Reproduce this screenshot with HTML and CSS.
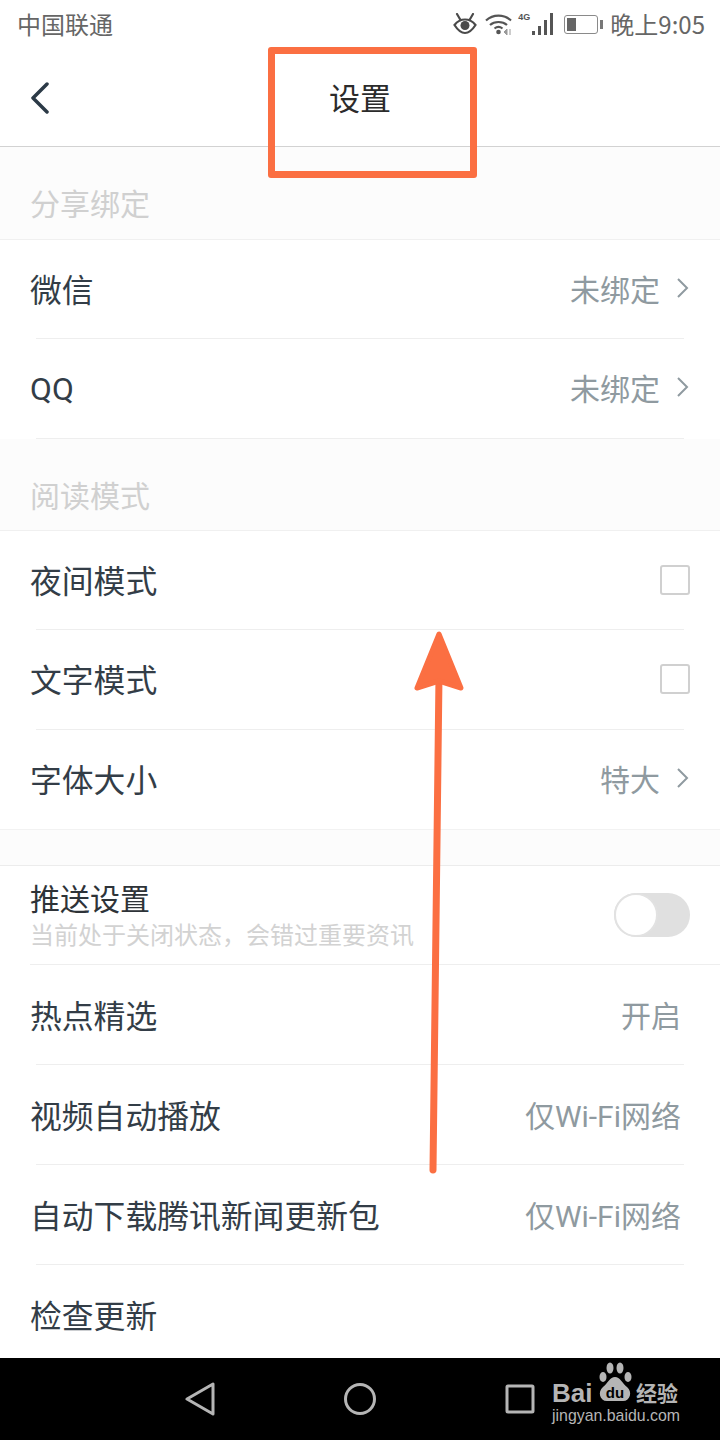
FILE: index.html
```html
<!DOCTYPE html>
<html lang="zh-CN">

<head>
    <meta charset="UTF-8">
    <meta name="viewport" content="width=device-width, initial-scale=1.0">
    <title>设置</title>
    <link rel="stylesheet" href="styles.css">
</head>

<body>
    <div class="screen">
        <div class="status-bar">
            <span class="carrier">中国联通</span>
            <div class="status-right">
                <svg class="icon-eye" width="24" height="22" viewBox="0 0 24 22" fill="none" stroke="#4a4a4a" stroke-width="2.2">
                    <path d="M1.5 12C5 7.500 8.500 6.500 12 6.500s7 1 10.500 5.500C19 17.500 15.500 20 12 20S5 17.500 1.500 12z"/>
                    <circle cx="12" cy="12.500" r="4.500" fill="#4a4a4a" stroke="none"/>
                    <path d="M4 1l3.500 6M20 1l-3.500 6" stroke-linecap="round"/>
                </svg>
                <svg class="icon-wifi" width="27" height="22" viewBox="0 0 27 22" fill="none" stroke="#555" stroke-width="2.2">
                    <path d="M1 7.500C8 1 19 1 26 7.500"/>
                    <path d="M5 12C9.500 8 17.500 8 22 12"/>
                    <path d="M9.500 15.500c2.500-2 5.500-2 8 0"/>
                    <circle cx="13.500" cy="19" r="2.300" fill="#555" stroke="none"/>
                    <path d="M19 19l3-3v6zM25 16v6" fill="#999" stroke="#999" stroke-width="1"/>
                </svg>
                <div class="signal">
                    <span class="net-type">4G</span>
                    <div class="bars">
                        <i class="bar bar-1"></i>
                        <i class="bar bar-2"></i>
                        <i class="bar bar-3"></i>
                        <i class="bar bar-4"></i>
                    </div>
                </div>
                <div class="battery">
                    <div class="battery-body"><div class="battery-level"></div></div>
                    <div class="battery-tip"></div>
                </div>
                <span class="clock">晚上9:05</span>
            </div>
        </div>

        <div class="nav-header">
            <svg class="back" width="22" height="32" viewBox="0 0 22 32" fill="none" stroke="#2c3a47" stroke-width="3.5" stroke-linecap="round" stroke-linejoin="round">
                <path d="M18 2L4 16l14 14"/>
            </svg>
            <h1 class="title">设置</h1>
        </div>

        <div class="section-title section-first">分享绑定</div>
        <div class="group">
            <div class="row row-short">
                <span class="row-label">微信</span>
                <div class="row-value">未绑定<svg class="chevron" width="14" height="22" viewBox="0 0 14 22" fill="none" stroke="#8f9aa0" stroke-width="2"><path d="M2 2l9 9-9 9"/></svg></div>
            </div>
            <div class="row">
                <span class="row-label label-latin">QQ</span>
                <div class="row-value">未绑定<svg class="chevron" width="14" height="22" viewBox="0 0 14 22" fill="none" stroke="#8f9aa0" stroke-width="2"><path d="M2 2l9 9-9 9"/></svg></div>
            </div>
        </div>

        <div class="section-title">阅读模式</div>
        <div class="group">
            <div class="row row-short">
                <span class="row-label">夜间模式</span>
                <div class="checkbox"></div>
            </div>
            <div class="row">
                <span class="row-label">文字模式</span>
                <div class="checkbox"></div>
            </div>
            <div class="row row-last">
                <span class="row-label">字体大小</span>
                <div class="row-value">特大<svg class="chevron" width="14" height="22" viewBox="0 0 14 22" fill="none" stroke="#8f9aa0" stroke-width="2"><path d="M2 2l9 9-9 9"/></svg></div>
            </div>
        </div>

        <div class="spacer"></div>

        <div class="group">
            <div class="row row-push">
                <div class="push-text">
                    <span class="push-label">推送设置</span>
                    <span class="push-note">当前处于关闭状态，会错过重要资讯</span>
                </div>
                <div class="toggle"><div class="knob"></div></div>
            </div>
            <div class="row row-plain">
                <span class="row-label">热点精选</span>
                <span class="row-value">开启</span>
            </div>
            <div class="row row-plain">
                <span class="row-label">视频自动播放</span>
                <span class="row-value">仅Wi-Fi网络</span>
            </div>
            <div class="row row-plain">
                <span class="row-label">自动下载腾讯新闻更新包</span>
                <span class="row-value">仅Wi-Fi网络</span>
            </div>
            <div class="row row-plain row-last">
                <span class="row-label">检查更新</span>
            </div>
        </div>

        <div class="system-nav">
            <svg width="30" height="34" viewBox="0 0 30 34" fill="none" stroke="#b5b5b5" stroke-width="3" stroke-linejoin="round"><path d="M28 2v30L2 17z"/></svg>
            <svg width="34" height="34" viewBox="0 0 34 34" fill="none" stroke="#b5b5b5" stroke-width="3"><circle cx="17" cy="17" r="14.5"/></svg>
            <svg width="30" height="30" viewBox="0 0 30 30" fill="none" stroke="#b5b5b5" stroke-width="3" stroke-linejoin="round"><rect x="2" y="2" width="26" height="26" rx="1"/></svg>
        </div>

        <!-- annotations on top of the screenshot -->
        <div class="mark-box"></div>
        <svg class="mark-arrow" width="60" height="560" viewBox="0 0 60 560" fill="none">
            <path d="M23 542L29 48" stroke="#fb6f42" stroke-width="7" stroke-linecap="round"/>
            <path d="M29 6L7 60 29 53 51 60z" fill="#fb6f42" stroke="#fb6f42" stroke-width="5" stroke-linejoin="round"/>
        </svg>

        <div class="watermark">
            <div class="wm-top">
                <span class="wm-bai">Bai</span>
                <svg class="wm-paw" width="38" height="45" viewBox="0 0 38 45" fill="#b5b5b5">
                    <ellipse cx="7" cy="15" rx="3.5" ry="5"/>
                    <ellipse cx="14" cy="6" rx="3.5" ry="5.5"/>
                    <ellipse cx="24" cy="6" rx="3.5" ry="5.5"/>
                    <ellipse cx="32" cy="15" rx="3.5" ry="5"/>
                    <path d="M19 15c5 0 7 6 12 10 6 5 3 15-5 14H12c-8 1-11-9-5-14 5-4 7-10 12-10z"/>
                    <text x="19" y="36" text-anchor="middle" class="wm-du">du</text>
                </svg>
                <span class="wm-cn">经验</span>
            </div>
            <div class="wm-url">jingyan.baidu.com</div>
        </div>
    </div>
</body>

</html>
```

FILE: styles.css
```css
* {
    box-sizing: border-box;
}

html,
body {
    margin: 0;
    padding: 0;
}

body {
    font-family: "Noto Sans CJK SC", "Liberation Sans", sans-serif;
    color: #333;
    background-color: #fcfcfc;
}

.screen {
    position: relative;
    width: 720px;
    height: 1440px;
    overflow: hidden;
    display: flex;
    flex-direction: column;
    background-color: #fcfcfc;
}

/* status bar */
.status-bar {
    height: 50px;
    flex-shrink: 0;
    display: flex;
    justify-content: space-between;
    align-items: center;
    padding: 0 15px 2px 17px;
    background-color: #fff;
    color: #666;
}

.carrier {
    font-size: 24px;
    line-height: 48px;
}

.status-right {
    display: flex;
    align-items: center;
}

.icon-eye {
    margin-right: 8px;
}

.icon-wifi {
    margin-right: 6px;
}

.signal {
    position: relative;
    width: 35px;
    height: 22px;
    margin-right: 11px;
}

.net-type {
    position: absolute;
    left: 0;
    top: 0;
    font-family: "Liberation Sans", sans-serif;
    font-size: 9px;
    font-weight: bold;
    line-height: 9px;
    color: #555;
}

.bars {
    position: absolute;
    right: 0;
    bottom: 0;
    display: flex;
    align-items: flex-end;
    gap: 3px;
}

.bar {
    display: block;
    width: 3px;
    background-color: #555;
}

.bar-1 { height: 4px; }
.bar-2 { height: 9px; }
.bar-3 { height: 15px; }
.bar-4 { height: 22px; }

.battery {
    display: flex;
    align-items: center;
    margin-right: 7px;
}

.battery-body {
    width: 34px;
    height: 19px;
    padding: 2px;
    border: 1.5px solid #8a8a8a;
    border-radius: 3px;
}

.battery-level {
    width: 9px;
    height: 100%;
    background-color: #666;
}

.battery-tip {
    width: 3px;
    height: 9px;
    margin-left: 2px;
    background-color: #777;
}

.clock {
    font-size: 24px;
    line-height: 48px;
    color: #666;
}

/* page header */
.nav-header {
    height: 97px;
    flex-shrink: 0;
    display: flex;
    justify-content: center;
    align-items: center;
    padding-bottom: 4px;
    position: relative;
    background-color: #fff;
    border-bottom: 1px solid #d2d2d2;
}

.back {
    position: absolute;
    left: 29px;
    top: 32px;
}

.title {
    margin: 0;
    font-size: 31px;
    font-weight: normal;
    color: #2b2b2b;
}

.section-title {
    height: 92px;
    flex-shrink: 0;
    padding: 30px 0 0 30px;
    font-size: 30px;
    line-height: 50px;
    color: #d0d0d0;
    border-bottom: 1px solid #f0f0f0;
}

.section-first {
    height: 93px;
}

.group {
    flex-shrink: 0;
    background-color: #fff;
}

.row {
    position: relative;
    height: 100px;
    display: flex;
    justify-content: space-between;
    align-items: center;
    padding: 0 30px 4px;
}

.row-short {
    height: 99px;
}

/* divider is inset from the edges */
.row::after {
    content: "";
    position: absolute;
    left: 36px;
    right: 36px;
    bottom: 0;
    height: 1px;
    background-color: #eeeeee;
}

.row-last::after {
    left: 0;
    right: 0;
    background-color: #f2f2f2;
}

.row-label {
    font-family: Roboto, "Noto Sans CJK SC", sans-serif;
    font-size: 31.8px;
    color: #333d47;
    white-space: nowrap;
}

/* Roboto only line sits a bit higher than the CJK ones */
.label-latin {
    margin-top: 4px;
}

.row-value {
    display: flex;
    align-items: center;
    font-family: Roboto, "Noto Sans CJK SC", sans-serif;
    font-size: 30px;
    color: #8f9aa0;
    white-space: nowrap;
}

.chevron {
    margin-left: 16px;
}

.row-plain {
    padding-right: 39px;
    padding-bottom: 2px;
}

.checkbox {
    width: 30px;
    height: 30px;
    margin-top: 2px;
    border: 2px solid #d0d0d0;
    border-radius: 3px;
}

.spacer {
    height: 36px;
    flex-shrink: 0;
    border-bottom: 1px solid #ececec;
}

/* push row */
.row-push {
    height: 99px;
    padding-bottom: 0;
}

.row-push::after {
    left: 30px;
    right: 0;
}

.push-text {
    display: flex;
    flex-direction: column;
    margin-bottom: 3px;
}

.push-label {
    font-size: 30px;
    line-height: 38px;
    margin-bottom: 2px;
    color: #2e3338;
}

.push-note {
    font-size: 24px;
    line-height: 32px;
    color: #d2d2d2;
    white-space: nowrap;
}

.toggle {
    width: 76px;
    height: 44px;
    margin-bottom: 2px;
    border-radius: 22px;
    background-color: #e0e0e0;
}

.knob {
    width: 44px;
    height: 44px;
    border: 2px solid #e2e2e2;
    border-radius: 50%;
    background-color: #fff;
}

/* android buttons */
.system-nav {
    position: absolute;
    left: 0;
    right: 0;
    bottom: 0;
    height: 82px;
    background-color: #000;
}

.system-nav svg {
    position: absolute;
    top: 24px;
}

.system-nav svg:nth-child(1) { left: 185px; }
.system-nav svg:nth-child(2) { left: 343px; }
.system-nav svg:nth-child(3) { left: 505px; top: 26px; }

/* orange marks */
.mark-box {
    position: absolute;
    left: 268px;
    top: 47px;
    width: 209px;
    height: 131px;
    border: 7px solid #fb6f42;
    border-radius: 3px;
}

.mark-arrow {
    position: absolute;
    left: 410px;
    top: 628px;
}

/* watermark */
.watermark {
    position: absolute;
    left: 552px;
    top: 1362px;
    width: 140px;
    color: #b5b5b5;
}

.wm-top {
    display: flex;
    align-items: flex-end;
    height: 45px;
}

.wm-bai {
    width: 44px;
    margin-bottom: 1px;
    font-family: "Liberation Sans", sans-serif;
    font-size: 26px;
    font-weight: bold;
    line-height: 26px;
}

.wm-paw {
    flex-shrink: 0;
    margin-right: 2px;
}

.wm-du {
    font-family: "Liberation Sans", sans-serif;
    font-size: 15px;
    font-weight: bold;
    fill: #000;
}

.wm-cn {
    font-size: 21px;
    line-height: 30px;
    font-weight: bold;
    white-space: nowrap;
}

.wm-url {
    margin-top: -1px;
    font-family: "Liberation Sans", sans-serif;
    font-size: 15.9px;
    line-height: 20px;
    white-space: nowrap;
}
```
